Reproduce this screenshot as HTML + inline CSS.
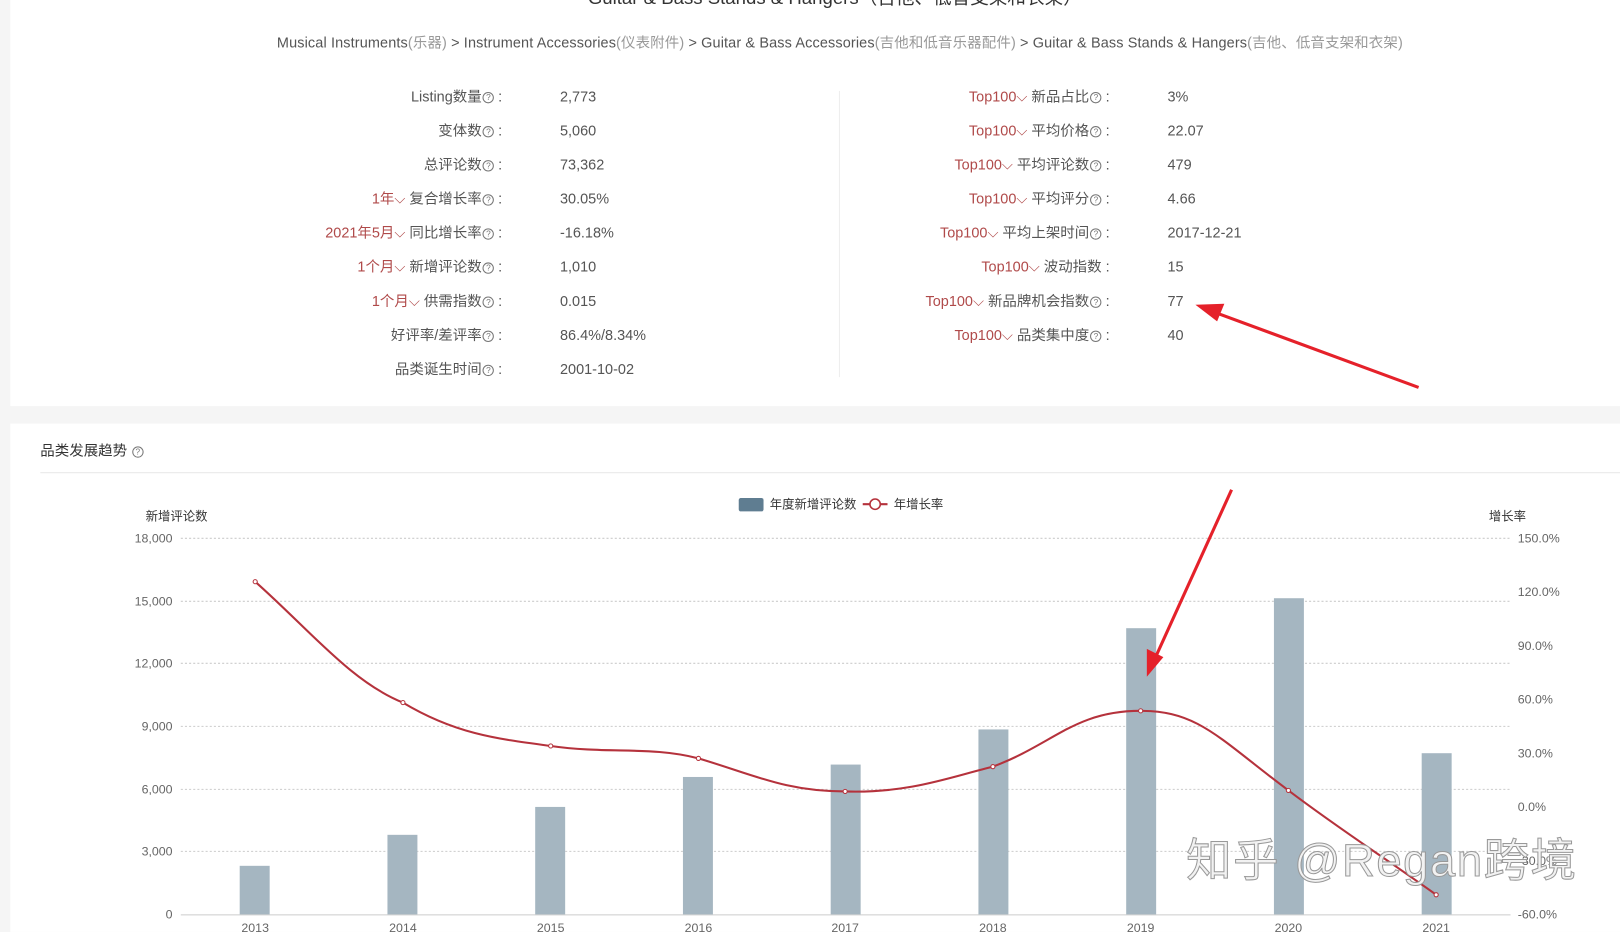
<!DOCTYPE html>
<html><head><meta charset="utf-8"><style>
html,body{margin:0;padding:0;width:1620px;height:932px;overflow:hidden;background:#f5f5f5;}
#w{position:absolute;left:0;top:0;width:1568px;height:902px;transform:scale(1.0332);transform-origin:0 0;font-family:"Liberation Sans","Noto Sans CJK SC",sans-serif;color:#555;}
.p{position:absolute;background:#fff;}
.t{position:absolute;white-space:nowrap;font-size:14px;line-height:16px;}
.r{color:#b04a4a}
.g{color:#999}
.q{display:inline-block;width:9px;height:9px;border:1px solid #777;border-radius:50%;font-size:8px;line-height:9px;text-align:center;color:#777;vertical-align:1px;margin-left:1px}
</style></head><body><div id="w">
<div class="p" style="left:10px;top:0;width:1558px;height:393px"></div>
<div class="p" style="left:10px;top:410px;width:1558px;height:492px"></div>
<div class="t" style="left:0;width:1616px;text-align:center;top:-12px;font-size:18px;line-height:20px;color:#333">Guitar &amp; Bass Stands &amp; Hangers（吉他、低音支架和衣架）</div>
<div class="t" style="left:268px;top:33px;color:#555;letter-spacing:0.12px">Musical Instruments<span class="g">(乐器)</span> &gt; Instrument Accessories<span class="g">(仪表附件)</span> &gt; Guitar &amp; Bass Accessories<span class="g">(吉他和低音乐器配件)</span> &gt; Guitar &amp; Bass Stands &amp; Hangers<span class="g">(吉他、低音支架和衣架)</span></div>
<div style="position:absolute;left:812px;top:88px;width:1px;height:277px;background:#eee"></div>
<div id="stats"></div>
<div class="t" style="left:39px;top:428px;font-size:14px;color:#333">品类发展趋势 <span class="q">?</span></div>
<div style="position:absolute;left:39px;top:457px;width:1529px;height:1px;background:#e8e8e8"></div>
<svg style="position:absolute;left:0;top:0" width="1568" height="902" font-family="Liberation Sans,Noto Sans CJK SC,sans-serif" font-size="12">
<g stroke="#ccc" stroke-dasharray="2,2">
<line x1="175" x2="1462" y1="521" y2="521"/><line x1="175" x2="1462" y1="582" y2="582"/><line x1="175" x2="1462" y1="642" y2="642"/><line x1="175" x2="1462" y1="703" y2="703"/><line x1="175" x2="1462" y1="764" y2="764"/><line x1="175" x2="1462" y1="824" y2="824"/></g>
<line x1="175" x2="1462" y1="885.5" y2="885.5" stroke="#ccc"/>
<g fill="#666" text-anchor="end"><text x="167" y="525">18,000</text><text x="167" y="586">15,000</text><text x="167" y="646">12,000</text><text x="167" y="707">9,000</text><text x="167" y="768">6,000</text><text x="167" y="828">3,000</text><text x="167" y="889">0</text></g>
<g fill="#666"><text x="1469" y="525">150.0%</text><text x="1469" y="577">120.0%</text><text x="1469" y="629">90.0%</text><text x="1469" y="681">60.0%</text><text x="1469" y="733">30.0%</text><text x="1469" y="785">0.0%</text><text x="1469" y="837">-30.0%</text><text x="1469" y="889">-60.0%</text></g>
<g fill="#333"><text x="141" y="504">新增评论数</text><text x="1441" y="504">增长率</text></g>
<g fill="#a5b6c1"><rect x="232" y="838" width="29" height="47"/><rect x="375" y="808" width="29" height="77"/><rect x="518" y="781" width="29" height="104"/><rect x="661" y="752" width="29" height="133"/><rect x="804" y="740" width="29" height="145"/><rect x="947" y="706" width="29" height="179"/><rect x="1090" y="608" width="29" height="277"/><rect x="1233" y="579" width="29" height="306"/><rect x="1376" y="729" width="29" height="156"/></g>
<g fill="#666" text-anchor="middle"><text x="247" y="902">2013</text><text x="390" y="902">2014</text><text x="533" y="902">2015</text><text x="676" y="902">2016</text><text x="818" y="902">2017</text><text x="961" y="902">2018</text><text x="1104" y="902">2019</text><text x="1247" y="902">2020</text><text x="1390" y="902">2021</text></g>
<path d="M247,563 C300,610 340,660 390,680 C440,710 480,715 533,722 C590,730 630,722 676,734 C730,750 760,766 818,766 C880,768 920,752 961,742 C1020,720 1040,688 1104,688 C1160,688 1180,715 1247,765 C1300,805 1340,830 1390,866" fill="none" stroke="#b5323c" stroke-width="2"/>
<g fill="#fff" stroke="#b5323c" stroke-width="1"><circle cx="247" cy="563" r="2"/><circle cx="390" cy="680" r="2"/><circle cx="533" cy="722" r="2"/><circle cx="676" cy="734" r="2"/><circle cx="818" cy="766" r="2"/><circle cx="961" cy="742" r="2"/><circle cx="1104" cy="688" r="2"/><circle cx="1247" cy="765" r="2"/><circle cx="1390" cy="866" r="2"/></g>
<rect x="715" y="482" width="24" height="13" rx="2" fill="#5f7d91"/>
<text x="745" y="492" fill="#333">年度新增评论数</text>
<line x1="835" x2="859" y1="488" y2="488" stroke="#b5323c" stroke-width="2"/><circle cx="847" cy="488" r="5" fill="#fff" stroke="#b5323c" stroke-width="1.5"/>
<text x="865" y="492" fill="#333">年增长率</text>
<g fill="#e5212a" stroke="#e5212a">
<line x1="1373" y1="375" x2="1175" y2="302" stroke-width="3"/><polygon points="1157,295 1185,294 1178,311" stroke="none"/>
<line x1="1192" y1="474" x2="1118" y2="637" stroke-width="3"/><polygon points="1110,655 1110,628 1126,636" stroke="none"/>
</g>
<text x="1148" y="848" font-size="44" letter-spacing="1.5" fill="#f2f2f2" stroke="#999" stroke-width="1" font-family="Liberation Sans,Noto Sans CJK SC,sans-serif">知乎 @Regan跨境</text>
</svg>
</div>
<script>
var L=[["","Listing数量","2,773"],["","变体数","5,060"],["","总评论数","73,362"],["1年","复合增长率","30.05%"],["2021年5月","同比增长率","-16.18%"],["1个月","新增评论数","1,010"],["1个月","供需指数","0.015"],["","好评率/差评率","86.4%/8.34%"],["","品类诞生时间","2001-10-02"]];
var R=[["新品占比",1,"3%"],["平均价格",1,"22.07"],["平均评论数",1,"479"],["平均评分",1,"4.66"],["平均上架时间",1,"2017-12-21"],["波动指数",0,"15"],["新品牌机会指数",1,"77"],["品类集中度",1,"40"]];
var h="";
L.forEach(function(a,i){var y=85+33*i;h+='<div class="t" style="right:1082px;top:'+y+'px">'+(a[0]?'<span class="r">'+a[0]+'⌵</span> ':'')+a[1]+'<span class="q">?</span> :</div><div class="t" style="left:542px;top:'+y+'px">'+a[2]+'</div>';});
R.forEach(function(a,i){var y=85+33*i;h+='<div class="t" style="right:494px;top:'+y+'px"><span class="r">Top100⌵</span> '+a[0]+(a[1]?'<span class="q">?</span>':'')+' :</div><div class="t" style="left:1130px;top:'+y+'px">'+a[2]+'</div>';});
document.getElementById("stats").innerHTML=h;
</script>
</body></html>
